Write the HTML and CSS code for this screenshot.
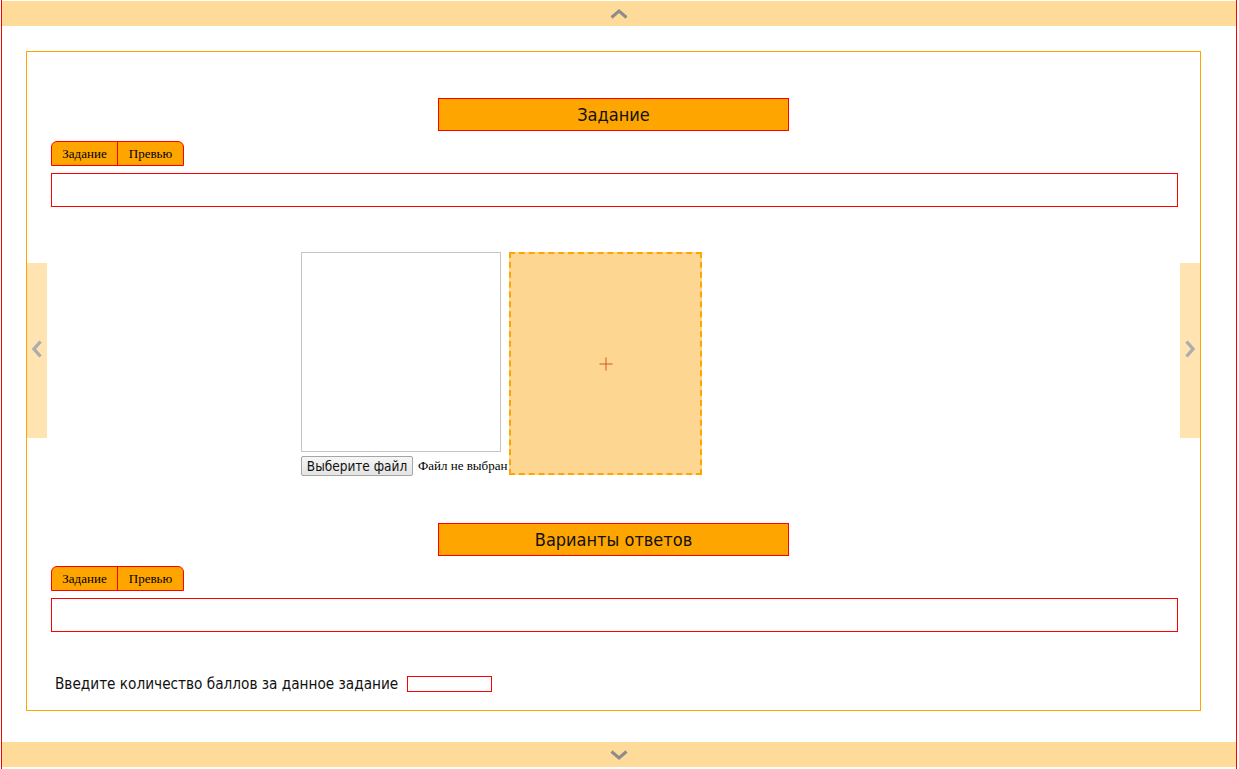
FILE: index.html
```html
<!DOCTYPE html>
<html lang="ru">
<head>
<meta charset="utf-8">
<title>Задание</title>
<link rel="stylesheet" href="styles.css">
</head>
<body>
<div class="page">
  <div class="nav-bar nav-top">
    <svg class="chev-h" width="20" height="10" viewBox="0 0 20 10"><polyline points="2.5,8.5 10,2 17.5,8.5" fill="none" stroke="#8c8c8c" stroke-width="3"/></svg>
  </div>

  <div class="card">
    <div class="side side-left">
      <svg width="12" height="20" viewBox="0 0 12 20"><polyline points="9.5,2.5 3,10 9.5,17.5" fill="none" stroke="#adadad" stroke-width="3.4"/></svg>
    </div>
    <div class="side side-right">
      <svg width="12" height="20" viewBox="0 0 12 20"><polyline points="2.5,2.5 9,10 2.5,17.5" fill="none" stroke="#adadad" stroke-width="3.4"/></svg>
    </div>

    <div class="heading heading-first">Задание</div>
    <div class="tabs">
      <div class="tab">Задание</div>
      <div class="tab tab-second">Превью</div>
    </div>
    <div class="editor"></div>

    <div class="media">
      <div class="upload">
        <div class="preview"></div>
        <div class="file-row">
          <span class="file-btn">Выберите файл</span>
          <span class="file-name">Файл не выбран</span>
        </div>
      </div>
      <div class="dropzone">
        <svg width="14" height="14" viewBox="0 0 14 14"><path d="M7 0.5V13.5M0.5 7H13.5" stroke="#d9531c" stroke-width="1" fill="none"/></svg>
      </div>
    </div>

    <div class="heading heading-second">Варианты ответов</div>
    <div class="tabs">
      <div class="tab">Задание</div>
      <div class="tab tab-second">Превью</div>
    </div>
    <div class="editor"></div>

    <div class="score">
      <span class="score-label">Введите количество баллов за данное задание</span>
      <span class="score-input"></span>
    </div>
  </div>

  <div class="nav-bar nav-bottom">
    <svg class="chev-h" width="20" height="10" viewBox="0 0 20 10"><polyline points="2.5,1.5 10,8 17.5,1.5" fill="none" stroke="#8c8c8c" stroke-width="3"/></svg>
  </div>
</div>
</body>
</html>
```

FILE: styles.css
```css
html, body {
  margin: 0;
  padding: 0;
  background: #ffffff;
}

.page {
  box-sizing: border-box;
  width: 1236px;
  height: 769px;
  margin-left: 1px;
  border-left: 1px solid #ff0000;
  border-right: 1px solid #ff0000;
  display: flex;
  flex-direction: column;
}

.nav-bar {
  height: 25px;
  background: rgba(255, 165, 0, 0.4);
  display: flex;
  align-items: center;
  justify-content: center;
  flex-shrink: 0;
}

.nav-top {
  margin-top: 1px;
}

.nav-bottom {
  margin-top: 31px;
}

.card {
  position: relative;
  box-sizing: border-box;
  width: 1175px;
  height: 660px;
  margin: 25px 0 0 24px;
  border: 1px solid #ffa500;
  padding-top: 46px;
  display: flex;
  flex-direction: column;
  flex-shrink: 0;
}

.side {
  position: absolute;
  top: 211px;
  width: 20px;
  height: 175px;
  background: rgba(255, 165, 0, 0.3);
  display: flex;
  align-items: center;
  justify-content: center;
}

.side svg {
  margin-top: -3px;
}

.side-left {
  left: 0;
}

.side-right {
  right: 0;
}

.heading {
  box-sizing: border-box;
  align-self: center;
  width: 351px;
  height: 33px;
  background: #ffa500;
  border: 1px solid #ff0000;
  font-family: "DejaVu Sans Condensed", "DejaVu Sans", sans-serif;
  font-stretch: condensed;
  font-size: 18px;
  color: #111;
  display: flex;
  align-items: center;
  justify-content: center;
}

.heading-second {
  margin-top: 47px;
}

.tabs {
  box-sizing: border-box;
  align-self: flex-start;
  display: flex;
  height: 25px;
  margin: 10px 0 0 24px;
  border: 1px solid #ff0000;
  border-radius: 6px 6px 0 0;
  background: #ffa500;
  overflow: hidden;
}

.tab {
  box-sizing: border-box;
  width: 65px;
  display: flex;
  align-items: center;
  justify-content: center;
  font-family: "Liberation Serif", serif;
  font-size: 13px;
  color: #000;
}

.tab-second {
  width: 66px;
  border-left: 1px solid #ff0000;
}

.editor {
  box-sizing: border-box;
  width: 1127px;
  height: 34px;
  margin: 7px 0 0 24px;
  border: 1px solid #ff0000;
}

.media {
  display: flex;
  align-items: flex-start;
  margin: 45px 0 0 274px;
}

.upload {
  width: 208px;
  display: flex;
  flex-direction: column;
  gap: 4px;
}

.preview {
  box-sizing: border-box;
  width: 200px;
  height: 200px;
  border: 1px solid #c4c4c4;
  background: #fff;
}

.file-row {
  display: flex;
  align-items: center;
  white-space: nowrap;
}

.file-btn {
  box-sizing: border-box;
  height: 20px;
  width: 112px;
  display: flex;
  align-items: center;
  justify-content: center;
  border: 1px solid #a5a5a5;
  border-radius: 2px;
  background: linear-gradient(#f6f6f6, #e4e4e4);
  font-family: "DejaVu Sans Condensed", "DejaVu Sans", sans-serif;
  font-stretch: condensed;
  font-size: 13.5px;
  color: #111;
}

.file-name {
  margin-left: 5px;
  font-family: "Liberation Serif", serif;
  font-size: 13px;
  color: #000;
}

.dropzone {
  box-sizing: border-box;
  width: 193px;
  height: 223px;
  border: 2px dashed #ffa500;
  background: #fdd692;
  display: flex;
  align-items: center;
  justify-content: center;
}

.score {
  display: flex;
  align-items: center;
  margin: 43px 0 0 28px;
  gap: 9px;
}

.score-label {
  font-family: "DejaVu Sans Condensed", "DejaVu Sans", sans-serif;
  font-stretch: condensed;
  font-size: 15.2px;
  color: #111;
}

.score-input {
  box-sizing: border-box;
  width: 85px;
  height: 16px;
  border: 1px solid #ff0000;
}
```
